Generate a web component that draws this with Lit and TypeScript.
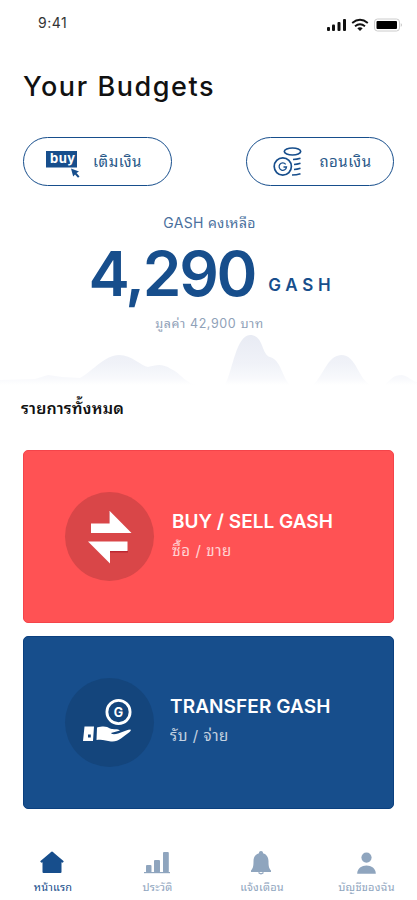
import { LitElement, html, svg, css } from "lit";
import { customElement } from "lit/decorators.js";

const house = svg`<svg width="24" height="24" viewBox="0 0 24 24"><path fill="currentColor" d="M12 .5Q13 .5 14 2l9.800 8.300-1 1.500-1.300-.6V21q0 1-1 1h-17q-1 0-1-1V11.200L1.200 11.800.2 10.300 10 2Q11 .5 12 .5Z"/></svg>`;
const bars = svg`<svg width="26" height="24" viewBox="0 0 26 24"><g fill="currentColor"><rect x="2" y="14" width="5.500" height="7.500" rx="1"/><rect x="10" y="9" width="6" height="12.500" rx="1"/><rect x="19" y="1" width="5.800" height="20.500" rx="1"/><rect y="21" width="26" height="1.200"/></g></svg>`;
const bell = svg`<svg width="22" height="24" viewBox="1 0 22 24"><path fill="currentColor" d="M12 0a2 2 0 0 1 2 2.200c3.600 1 5.500 4 5.500 8 0 5 .5 7 2.500 9.300V21H2v-1.500C4 17.200 4.500 15.200 4.500 10.200c0-4 1.900-7 5.500-8A2 2 0 0 1 12 0Z"/><path fill="none" stroke="currentColor" stroke-width="1.200" d="M9.500 21.500q2.500 2.600 5 0"/></svg>`;
const person = svg`<svg width="20" height="24" viewBox="0 0 20 24"><g fill="currentColor"><circle cx="10.500" cy="6.600" r="5.100"/><path d="M1.200 22.800c0-11 18.600-11 18.600 0Z"/></g></svg>`;

@customElement("app-root")
export class AppRoot extends LitElement {
  static styles = css`
    :host { display: block; width: 417px; height: 900px; overflow: hidden; background: #fff;
      font-family: Inter, "Noto Sans Thai Looped", "Loma", "Waree", "Garuda", "Sarabun", sans-serif; color: #174e8c; }
    * { box-sizing: border-box; }
    svg { display: block; flex: none; }
    .page { height: 900px; display: flex; flex-direction: column; white-space: nowrap; }
    .status { height: 47px; padding: 0 15px 0 38px; display: flex; justify-content: space-between; color: #333; font-size: 14px; line-height: 46px; letter-spacing: .5px; }
    .status svg { margin-top: 16px; }
    h1 { margin: 19px 0 0 23px; height: 42px; font: 500 27px/42px Inter, sans-serif; letter-spacing: 1.55px; color: #111; }
    .actions { margin: 29px 23px 0; display: flex; justify-content: space-between; }
    .pill { width: 148.500px; height: 49px; border: 1.5px solid #174e8c; border-radius: 25px; display: flex; align-items: center; font-size: 15px; letter-spacing: .5px; color: #285889; }
    .pill span { padding-bottom: 3px; }
    .buy { padding-left: 22px; gap: 13px; }
    .draw { padding-left: 26px; gap: 17px; }
    .balance { height: 198px; position: relative; display: flex; flex-direction: column; align-items: center; }
    .hills { position: absolute; left: 0; top: 145px; }
    .left { margin: 27px 0 0 2px; height: 20px; font-size: 14px; line-height: 20px; letter-spacing: .3px; color: #4a709d; }
    .amount { position: relative; height: 68px; margin-left: 7px; display: flex; align-items: flex-start; gap: 13px; font-weight: 600; font-size: 62px; line-height: 81px; letter-spacing: -2.300px; }
    .unit { font-size: 17px; letter-spacing: 4.800px; line-height: 20px; margin-top: 42px; }
    .value { position: relative; margin: 13px 0 0 2px; height: 20px; font-size: 12.500px; line-height: 20px; letter-spacing: .6px; color: #8fa1b8; }
    h2 { margin: 12px 0 0 21px; height: 26px; font-size: 16px; line-height: 25px; font-weight: 600; letter-spacing: .2px; color: #111; }
    .cards { margin: 28px 23px 0; display: grid; gap: 13px; }
    .card { height: 173px; border-radius: 5px; padding-left: 41px; display: flex; align-items: center; color: #fff; }
    .red { background: #ff5254; border: 1px solid #f4444a; }
    .blue { background: #174e8c; border: 1px solid #0b407f; }
    .disc { width: 89px; height: 89px; border-radius: 50%; background: #d94648; display: grid; place-items: center; }
    .blue .disc { background: #14457c; padding: 0 6px 4px 0; }
    .copy { margin-left: 18px; height: 60px; }
    .blue .copy { margin: -2px 0 0 16px; }
    .name { font-size: 19px; line-height: 29px; font-weight: 600; }
    .blue .name { letter-spacing: .1px; }
    .sub { font-size: 15px; line-height: 30px; letter-spacing: .6px; opacity: .75; }
    nav { margin-top: 42px; display: grid; grid-template-columns: repeat(4, 104.500px); }
    .tab { display: flex; flex-direction: column; align-items: center; color: #8fa5be; font-size: 11px; line-height: 20px; gap: 2px; letter-spacing: .2px; }
    .tab span { padding-left: 1.5px; }
    .on { color: #174e8c; }
    .g { font: 700 12.500px Inter, sans-serif; }
    .word { font: 700 13px Inter, sans-serif; }
  `;

  tab(icon: unknown, label: string, on = false) {
    return html`<div class="tab ${on ? "on" : ""}">${icon}<span>${label}</span></div>`;
  }

  render() {
    return html`<div class="page">
      <div class="status"><span>9:41</span>
        <svg width="76" height="18" viewBox="0 0 76 18">
          <g fill="#111"><rect x="1" y="11" width="3" height="4" rx="1"/><rect x="6" y="8.500" width="3" height="6.500" rx="1"/><rect x="11.500" y="6" width="3" height="9" rx="1"/><rect x="17" y="3" width="3" height="12" rx="1"/></g>
          <g fill="none" stroke="#111" stroke-width="1.900"><path d="M26.200 7q7.800-6.400 15.600 0"/><path d="M29 10.200q5-4 10 0"/></g><path fill="#111" d="M31.300 12.300q2.700-2 5.400 0L34 15Z"/>
          <rect x="48.500" y="3" width="25" height="12" rx="3" fill="none" stroke="#ccc"/><rect x="50.500" y="5" width="20.500" height="8" rx="1" fill="#000"/><path d="M74.800 7v4q2-2 0-4" fill="#bbb"/>
        </svg>
      </div>
      <h1>Your Budgets</h1>
      <div class="actions">
        <div class="pill buy">
          <svg width="34" height="36" viewBox="0 0 34 36"><rect y="7" width="31" height="16.500" fill="#174e8c"/><text x="4" y="19" fill="#fff" class="word">buy</text><path fill="#174e8c" d="m25 24.500 8 3-2.500 1.500 3 3.500-1.500 1.300-3-3.300-1.800 2Z"/></svg>
          <span>เติมเงิน</span>
        </div>
        <div class="pill draw">
          <svg width="30" height="32" viewBox="0 0 30 32"><g fill="none" stroke="#174e8c" stroke-width="1.700"><ellipse cx="19.500" cy="5.500" rx="8.200" ry="3.500"/><circle cx="9.800" cy="20.500" r="8.600"/><path d="M20 13.500q4 0 7.500-1.200M21 18.500q3 0 6.500-1.200M21 23.500q3 0 6.500-1.200M19 29q4.500 0 8.500-1.300"/><path stroke-width="1.300" d="M12.700 18.300a3.700 3.700 0 1 0 .8 2.700h-3"/></g></svg>
          <span>ถอนเงิน</span>
        </div>
      </div>
      <div class="balance">
        <svg class="hills" width="417" height="54" viewBox="0 0 417 54">
          <defs><linearGradient id="fade" gradientUnits="userSpaceOnUse" x1="0" y1="0" x2="0" y2="54"><stop stop-color="#e7eaf3"/><stop offset=".6" stop-color="#f0f2f8"/><stop offset=".88" stop-color="#f8f9fc"/><stop offset="1" stop-color="#fff"/></linearGradient></defs>
          <g fill="url(#fade)"><path d="M0 54V49L35 48 48 44 62 46 80 47C94 39 105 24 119 24 132 24 141 35 148 36 156 34 162 32 171 38 182 43 186 54 200 54Z"/><path d="M225 54C233 38 236 5 250 4 264 4 261 23 270 26 281 29 282 46 290 54Z"/><path d="M313 54C324 44 327 25 341 24 357 24 358 49 371 54Z"/><path d="M384 54C392 48 393 44 402 44 410 46 411 50 417 51V54Z"/></g>
        </svg>
        <div class="left">GASH คงเหลือ</div>
        <div class="amount"><span>4,290</span><span class="unit">GASH</span></div>
        <div class="value">มูลค่า 42,900 บาท</div>
      </div>
      <h2>รายการทั้งหมด</h2>
      <div class="cards">
        <div class="card red">
          <div class="disc"><svg width="46" height="54" viewBox="0 0 46 54"><path fill="#bc2731" d="M23 45V42.500h18v-2H21V47ZM22 1.500l2 1V15h-2Z"/><path fill="#fff" d="M4 13.500h18.500V.8L44.500 23H4ZM1 31.500h39.500v9.500H23v12.500Z"/></svg></div>
          <div class="copy"><div class="name">BUY / SELL GASH</div><div class="sub">ซื้อ / ขาย</div></div>
        </div>
        <div class="card blue">
          <div class="disc"><svg width="50" height="46" viewBox="0 0 50 46"><circle cx="36.500" cy="14" r="11.600" fill="none" stroke="#fff" stroke-width="2.800"/><text class="g" x="36.500" y="18.500" text-anchor="middle" fill="#fff">G</text><path fill="#fff" fill-rule="evenodd" d="M2.500 28.500h9.500l-1 14.500H1ZM6 36.500v3h2.800v-3ZM15 29.500c7-2 10-1 13 1 3 1.500 8-.5 10 2l-9 2.500 1 1c7 1 12-4 18.500-4.500 1 .8-.5 2-1.500 3-6 4-11 10-18 9-5-1-9-2.500-14.500-1.500Z"/></svg></div>
          <div class="copy"><div class="name">TRANSFER GASH</div><div class="sub">รับ / จ่าย</div></div>
        </div>
      </div>
      <nav>${this.tab(house, "หน้าแรก", true)}${this.tab(bars, "ประวัติ")}${this.tab(bell, "แจ้งเตือน")}${this.tab(person, "บัญชีของฉัน")}</nav>
    </div>`;
  }
}
